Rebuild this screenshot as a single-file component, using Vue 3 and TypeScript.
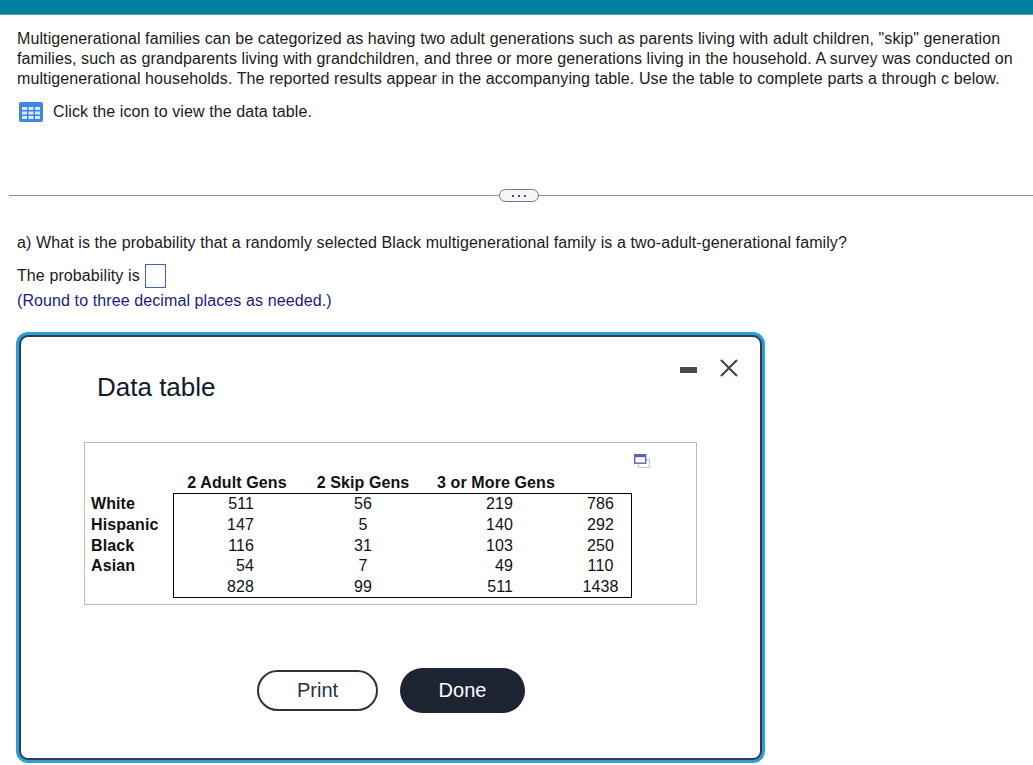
<template>
  <div class="page">
    <div class="top-bar"></div>

    <div class="question">
      <p class="intro">
        Multigenerational families can be categorized as having two adult generations such as parents living with adult children, "skip" generation families, such as grandparents living with grandchildren, and three or more generations living in the household. A survey was conducted on multigenerational households. The reported results appear in the accompanying table. Use the table to complete parts a through c below.
      </p>
      <div class="data-link">
        <svg class="grid-icon" width="24" height="20" viewBox="0 0 24 20">
          <rect width="24" height="20" rx="2" fill="#3f86e0" />
          <g fill="#d9e8fb">
            <rect x="3" y="5" width="5" height="3" />
            <rect x="9.500" y="5" width="5" height="3" />
            <rect x="16" y="5" width="5" height="3" />
            <rect x="3" y="9.500" width="5" height="3" />
            <rect x="9.500" y="9.500" width="5" height="3" />
            <rect x="16" y="9.500" width="5" height="3" />
            <rect x="3" y="14" width="5" height="3" />
            <rect x="9.500" y="14" width="5" height="3" />
            <rect x="16" y="14" width="5" height="3" />
          </g>
        </svg>
        <span>Click the icon to view the data table.</span>
      </div>
    </div>

    <div class="divider">
      <div class="pill"><i></i><i></i><i></i></div>
    </div>

    <div class="answer">
      <p class="prompt">a) What is the probability that a randomly selected Black multigenerational family is a two-adult-generational family?</p>
      <div class="answer-row">
        <span>The probability is</span>
        <span class="answer-box"></span>
      </div>
      <p class="hint">(Round to three decimal places as needed.)</p>
    </div>

    <div class="dialog">
      <div class="dialog-head">
        <h2>Data table</h2>
        <div class="window-btns">
          <span class="minimize"></span>
          <svg width="18" height="18" viewBox="0 0 18 18">
            <path d="M1 1l16 16M17 1L1 17" stroke="#3b4754" stroke-width="2.200" fill="none" />
          </svg>
        </div>
      </div>

      <div class="table-panel">
        <svg class="copy-icon" width="16" height="14" viewBox="0 0 16 14">
          <rect x="4.500" y="5.500" width="11" height="8" fill="#fff" stroke="#c3c8e4" stroke-width="1.200" />
          <rect x="0.700" y="0.700" width="11" height="8.500" fill="#fff" stroke="#5a66ac" stroke-width="1.400" />
          <rect x="0.700" y="0.700" width="11" height="2.500" fill="#5a66ac" />
        </svg>
        <table>
          <thead>
            <tr>
              <th class="corner"></th>
              <th v-for="h in headers" :key="h">{{ h }}</th>
              <th></th>
            </tr>
          </thead>
          <tbody>
            <tr v-for="row in rows" :key="row.label">
              <th class="label">{{ row.label }}</th>
              <td class="adult">{{ row.values[0] }}</td>
              <td class="skip">{{ row.values[1] }}</td>
              <td class="more">{{ row.values[2] }}</td>
              <td class="total">{{ row.values[3] }}</td>
            </tr>
          </tbody>
        </table>
      </div>

      <div class="actions">
        <button class="print" type="button">Print</button>
        <button class="done" type="button">Done</button>
      </div>
    </div>
  </div>
</template>

<script setup lang="ts">
const headers = ['2 Adult Gens', '2 Skip Gens', '3 or More Gens']

const rows = [
  { label: 'White', values: [511, 56, 219, 786] },
  { label: 'Hispanic', values: [147, 5, 140, 292] },
  { label: 'Black', values: [116, 31, 103, 250] },
  { label: 'Asian', values: [54, 7, 49, 110] },
  { label: '', values: [828, 99, 511, 1438] }
]
</script>

<style>
html,
body {
  margin: 0;
  background: #fff;
}
</style>

<style scoped>
.page {
  position: relative;
  width: 1033px;
  height: 765px;
  overflow: hidden;
  font-family: "Liberation Sans", Arial, sans-serif;
  font-size: 16px;
  color: #1a1a1a;
}

.top-bar {
  height: 14px;
  background: #007ea0;
  border-bottom: 1px solid #5aa9c2;
}

.question,
.answer {
  letter-spacing: 0.1px;
}

.question {
  padding: 14px 17px 0;
}

.intro {
  margin: 0;
  line-height: 20px;
}

.data-link {
  display: flex;
  align-items: center;
  gap: 10px;
  margin-top: 13px;
  padding-left: 2px;
  height: 20px;
}

.grid-icon {
  flex: none;
}

.divider {
  position: relative;
  display: flex;
  justify-content: center;
  margin: 73px 0 0 9px;
  height: 1px;
  background: #87919c;
}

.pill {
  display: flex;
  align-items: center;
  justify-content: center;
  gap: 4px;
  box-sizing: border-box;
  width: 40px;
  height: 13px;
  margin: -6px 0 0 -5px;
  border: 1px solid #6f7c8b;
  border-radius: 7px;
  background: #f3f5f8;
}

.pill i {
  width: 2px;
  height: 2px;
  background: #4c5663;
}

.answer {
  padding: 37px 17px 0;
}

.prompt {
  margin: 0;
  line-height: 20px;
}

.answer-row {
  display: flex;
  align-items: center;
  gap: 5px;
  height: 24px;
  margin-top: 11px;
}

.answer-box {
  box-sizing: border-box;
  width: 21px;
  height: 24px;
  border: 1px solid #3f62b5;
}

.hint {
  margin: 3px 0 0;
  line-height: 20px;
  color: #1a1a80;
}

.dialog {
  position: absolute;
  left: 19px;
  top: 335px;
  box-sizing: border-box;
  width: 743px;
  height: 425px;
  border: 2px solid #333b45;
  border-radius: 9px;
  box-shadow: 0 0 0 3px #2a9fd8;
  background: #fff;
}

.dialog-head {
  display: flex;
  justify-content: space-between;
  align-items: flex-start;
  height: 105px;
  padding: 0 22px 0 76px;
}

.dialog-head h2 {
  margin: 35px 0 0;
  font-size: 26px;
  font-weight: 400;
  line-height: 30px;
  color: #0f1a2e;
}

.window-btns {
  display: flex;
  align-items: center;
  gap: 23px;
  margin-top: 22px;
}

.minimize {
  width: 17px;
  height: 6px;
  background: #4a4a4a;
  margin-top: 4px;
}

.table-panel {
  position: relative;
  box-sizing: border-box;
  width: 613px;
  height: 163px;
  margin-left: 63px;
  border: 1px solid #bcbcbc;
  padding: 30px 0 0 6px;
}

.copy-icon {
  position: absolute;
  left: 549px;
  top: 11px;
}

table {
  border-collapse: collapse;
  table-layout: fixed;
  width: 541px;
  color: #111;
  letter-spacing: 0.1px;
}

th,
td {
  padding: 0;
  height: 20.700px;
  line-height: 20px;
  font-weight: 400;
  text-align: center;
}

thead th {
  font-weight: 700;
  height: 20px;
}

th:nth-child(1) { width: 82px; }
th:nth-child(2) { width: 128px; }
th:nth-child(3) { width: 124px; }
th:nth-child(4) { width: 142px; }

tbody tr:first-child td {
  border-top: 1px solid #000;
}

tbody tr:last-child td {
  border-bottom: 1px solid #000;
}

.label {
  font-weight: 700;
  text-align: left;
}

.adult {
  text-align: right;
  padding-right: 47px;
  border-left: 1px solid #000;
}

.more {
  text-align: right;
  padding-right: 54px;
}

.total {
  padding-left: 3px;
  border-right: 1px solid #000;
}

.actions {
  display: flex;
  justify-content: flex-start;
  align-items: center;
  gap: 22px;
  margin-top: 63px;
  padding-left: 236px;
}

button {
  box-sizing: border-box;
  font-family: inherit;
  font-size: 20px;
  cursor: pointer;
}

.print {
  width: 121px;
  height: 41px;
  border: 2px solid #2a3240;
  border-radius: 21px;
  background: #fff;
  color: #2a3240;
}

.done {
  width: 125px;
  height: 45px;
  border: 0;
  border-radius: 23px;
  background: #1c2331;
  color: #fff;
}
</style>
